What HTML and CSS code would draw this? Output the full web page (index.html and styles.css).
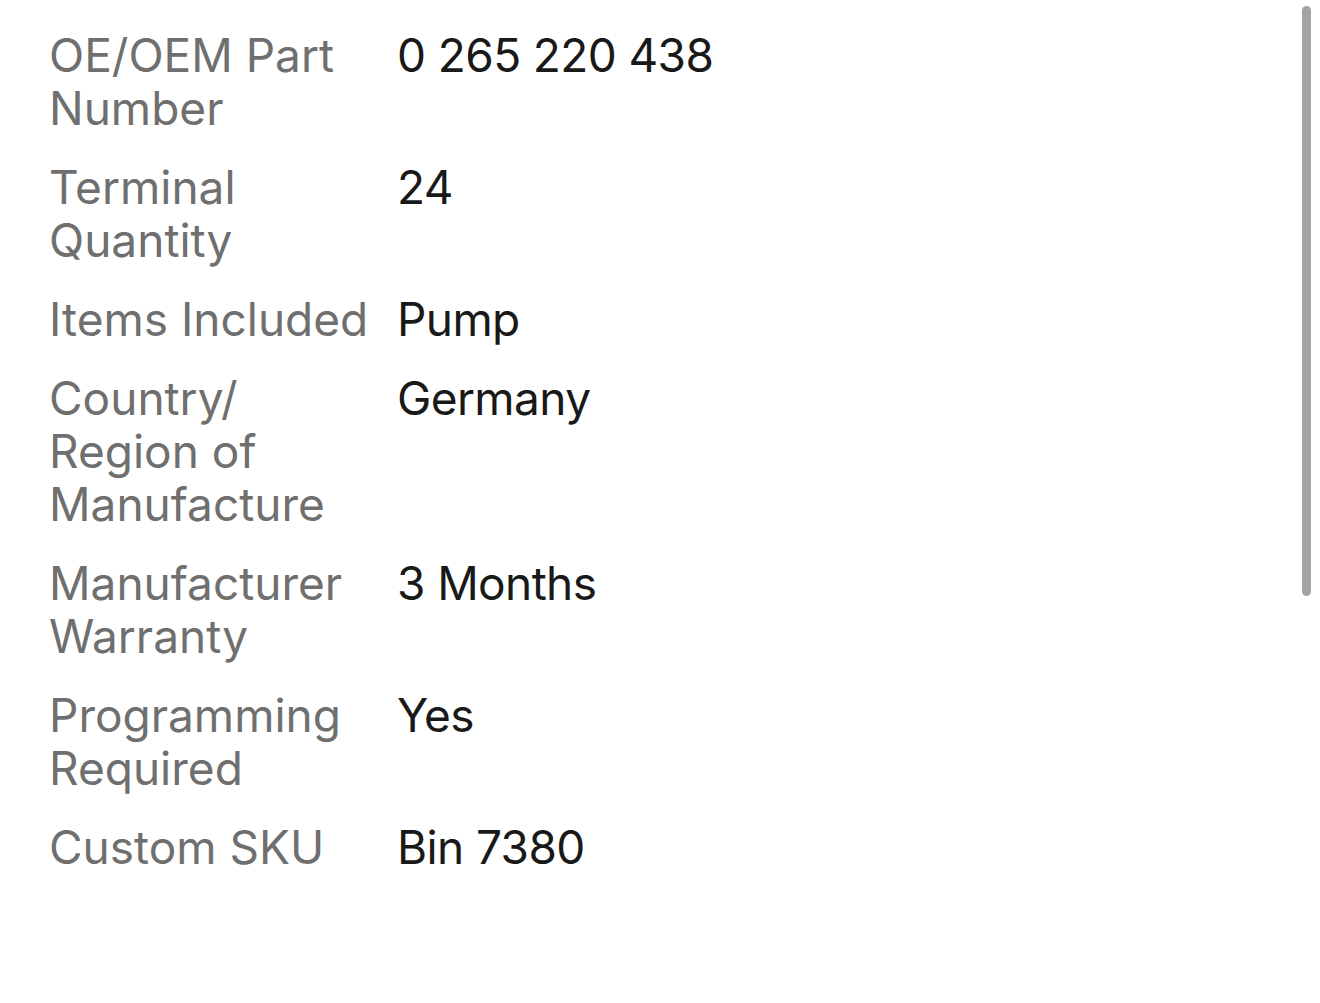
FILE: index.html
```html
<!DOCTYPE html>
<html lang="en">
<head>
<meta charset="utf-8">
<title>Item specifics</title>
<link rel="stylesheet" href="styles.css">
</head>
<body>
<div class="page">
  <dl class="specs">
    <dt class="label">OE/OEM Part Number</dt>
    <dd class="value">0 265 220 438</dd>
    <dt class="label">Terminal Quantity</dt>
    <dd class="value">24</dd>
    <dt class="label">Items Included</dt>
    <dd class="value">Pump</dd>
    <dt class="label">Country/<br>Region of Manufacture</dt>
    <dd class="value">Germany</dd>
    <dt class="label">Manufacturer Warranty</dt>
    <dd class="value">3 Months</dd>
    <dt class="label">Programming Required</dt>
    <dd class="value">Yes</dd>
    <dt class="label">Custom SKU</dt>
    <dd class="value">Bin 7380</dd>
  </dl>
  <div class="scrollbar"><div class="thumb"></div></div>
</div>
</body>
</html>
```
FILE: styles.css
```css
html, body {
  margin: 0;
  padding: 0;
  background: #ffffff;
}
.page {
  width: 1320px;
  height: 1003px;
  position: relative;
  overflow: hidden;
  font-family: Inter, "Liberation Sans", sans-serif;
}
.specs {
  margin: 0;
  padding: 29px 0 0 49px;
  display: grid;
  grid-template-columns: 330px auto;
  column-gap: 18px;
  row-gap: 26px;
  font-size: 46px;
  line-height: 53px;
}
.label {
  margin: 0;
  color: #6f6f6f;
}
.value {
  margin: 0;
  color: #191919;
  font-variant-numeric: proportional-nums;
  letter-spacing: -0.6px;
}
.scrollbar {
  position: absolute;
  top: 6px;
  right: 9px;
  width: 9px;
  height: 590px;
}
.thumb {
  width: 100%;
  height: 100%;
  border-radius: 5px;
  background: #a3a3a3;
}
```
